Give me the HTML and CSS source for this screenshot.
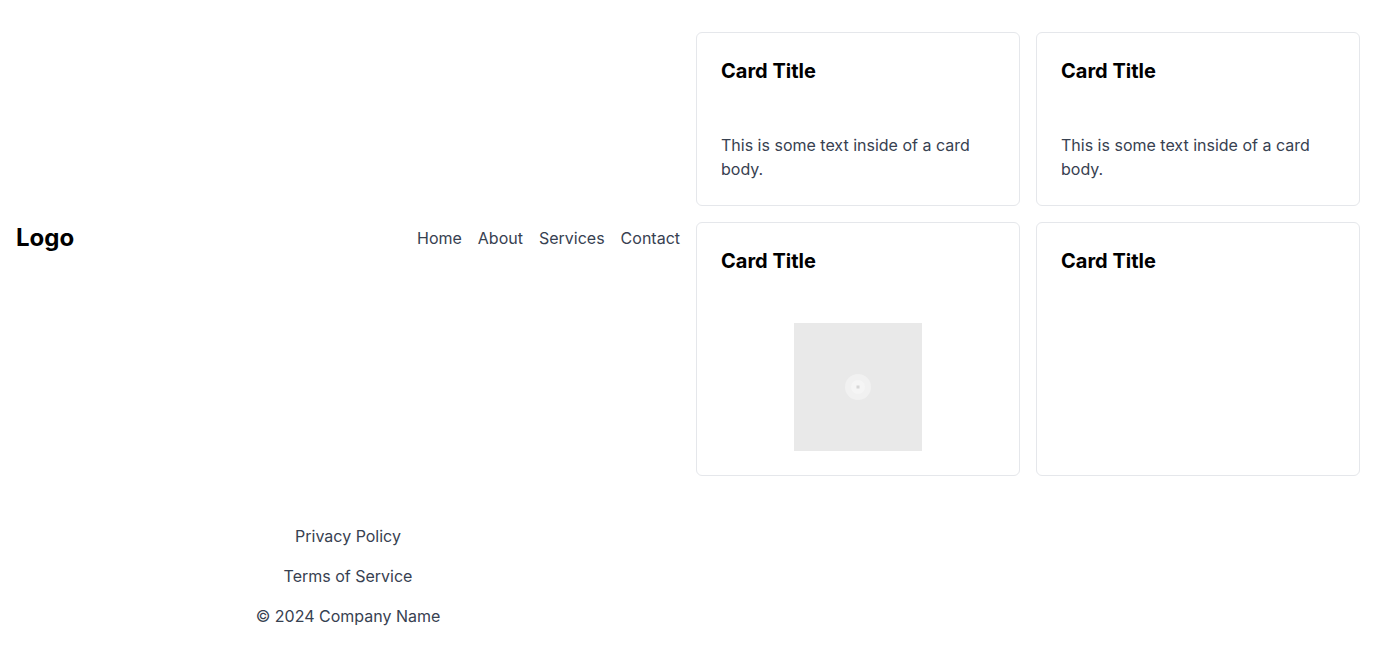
FILE: index.html
```html
<!DOCTYPE html>
<html lang="en">
<head>
<meta charset="utf-8">
<title>Page</title>
<link rel="stylesheet" href="styles.css">
</head>
<body>
<div class="page">
  <header class="site-header">
    <div class="logo">Logo</div>
    <nav class="nav">
      <a href="#">Home</a>
      <a href="#">About</a>
      <a href="#">Services</a>
      <a href="#">Contact</a>
    </nav>
  </header>
  <main class="main">
    <div class="card">
      <h2 class="card-title">Card Title</h2>
      <p class="card-text">This is some text inside of a card body.</p>
    </div>
    <div class="card">
      <h2 class="card-title">Card Title</h2>
      <p class="card-text">This is some text inside of a card body.</p>
    </div>
    <div class="card">
      <h2 class="card-title">Card Title</h2>
      <div class="card-image">
        <svg width="28" height="28" viewBox="0 0 28 28" aria-hidden="true">
          <circle cx="14" cy="14" r="13" fill="#f1f1f1"/>
          <circle cx="14" cy="14" r="7" fill="#f5f5f5"/>
          <rect x="12.5" y="12.5" width="3" height="3" fill="#d6d6d6"/>
        </svg>
      </div>
    </div>
    <div class="card">
      <h2 class="card-title">Card Title</h2>
    </div>
  </main>
  <footer class="site-footer">
    <a href="#">Privacy Policy</a>
    <a href="#">Terms of Service</a>
    <span>© 2024 Company Name</span>
  </footer>
</div>
</body>
</html>
```
FILE: styles.css
```css
* { box-sizing: border-box; }
html, body { margin: 0; padding: 0; background: #fff; }
body {
  font-family: Inter, "Noto Sans", "Liberation Sans", sans-serif;
  color: #374151;
  font-size: 16px;
  line-height: 24px;
}
.page {
  display: grid;
  grid-template-columns: 1fr 1fr;
  column-gap: 16px;
  padding: 0 16px;
}
.site-header {
  grid-column: 1;
  grid-row: 1;
  display: flex;
  align-items: center;
  justify-content: space-between;
}
.logo {
  font-size: 24px;
  line-height: 32px;
  font-weight: 700;
  color: #000;
}
.nav {
  display: flex;
  gap: 16px;
}
.nav a {
  color: #374151;
  text-decoration: none;
}
.main {
  grid-column: 2;
  grid-row: 1;
  padding-top: 32px;
  display: grid;
  grid-template-columns: 1fr 1fr;
  gap: 16px;
}
.card {
  border: 1px solid #e5e7eb;
  border-radius: 6px;
  padding: 24px;
  display: flex;
  flex-direction: column;
  gap: 48px;
}
.card-title {
  margin: 0;
  font-size: 20px;
  line-height: 28px;
  font-weight: 700;
  color: #000;
}
.card-text {
  margin: 0;
  color: #374151;
}
.card-image {
  width: 128px;
  height: 128px;
  align-self: center;
  background: #e9e9e9;
  display: flex;
  align-items: center;
  justify-content: center;
}
.site-footer {
  grid-column: 1;
  grid-row: 2;
  padding: 40px 0 24px;
  display: flex;
  flex-direction: column;
  align-items: center;
}
.site-footer a, .site-footer span {
  color: #374151;
  text-decoration: none;
  padding: 8px 0;
}
```
